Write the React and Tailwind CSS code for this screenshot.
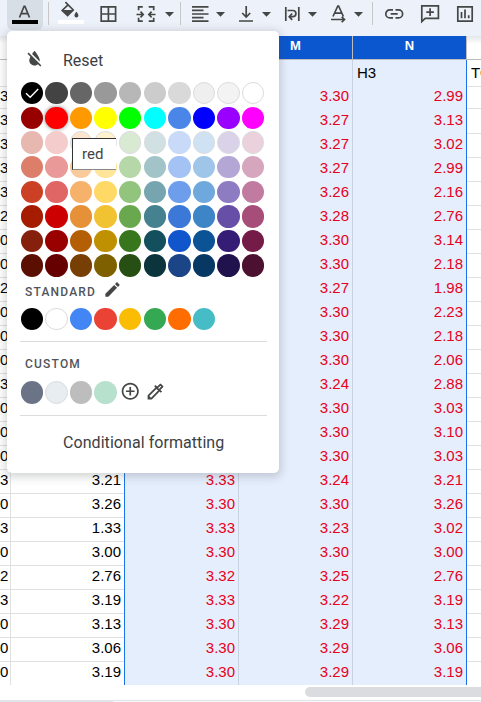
import React from "react";
import { MdOutlineColorize, MdAddCircleOutline } from "react-icons/md";

const PALETTE = [
  ["#000000", "#434343", "#666666", "#999999", "#b7b7b7", "#cccccc", "#d9d9d9", "#efefef", "#f3f3f3", "#ffffff"],
  ["#980000", "#ff0000", "#ff9900", "#ffff00", "#00ff00", "#00ffff", "#4a86e8", "#0000ff", "#9900ff", "#ff00ff"],
  ["#e6b8af", "#f4cccc", "#fce5cd", "#fff2cc", "#d9ead3", "#d0e0e3", "#c9daf8", "#cfe2f3", "#d9d2e9", "#ead1dc"],
  ["#dd7e6b", "#ea9999", "#f9cb9c", "#ffe599", "#b6d7a8", "#a2c4c9", "#a4c2f4", "#9fc5e8", "#b4a7d6", "#d5a6bd"],
  ["#cc4125", "#e06666", "#f6b26b", "#ffd966", "#93c47d", "#76a5af", "#6d9eeb", "#6fa8dc", "#8e7cc3", "#c27ba0"],
  ["#a61c00", "#cc0000", "#e69138", "#f1c232", "#6aa84f", "#45818e", "#3c78d8", "#3d85c6", "#674ea7", "#a64d79"],
  ["#85200c", "#990000", "#b45f06", "#bf9000", "#38761d", "#134f5c", "#1155cc", "#0b5394", "#351c75", "#741b47"],
  ["#5b0f00", "#660000", "#783f04", "#7f6000", "#274e13", "#0c343d", "#1c4587", "#073763", "#20124d", "#4c1130"],
];
const OUTLINED = new Set(["#efefef", "#f3f3f3", "#ffffff", "#fce5cd", "#fff2cc", "#d9ead3", "#d0e0e3", "#cfe2f3", "#d9d2e9", "#ead1dc", "#e8edf1"]);
const STANDARD = ["#000000", "#ffffff", "#4285f4", "#ea4335", "#fbbc04", "#34a853", "#ff6d01", "#46bdc6"];
const CUSTOM = ["#6b7487", "#e8edf1", "#bdbdbd", "#b7e1cd"];

const ROWS = [
  ["3", "", "", "3.30", "2.99"],
  ["3", "", "", "3.27", "3.13"],
  ["3", "", "", "3.27", "3.02"],
  ["3", "", "", "3.27", "2.99"],
  ["3", "", "", "3.26", "2.16"],
  ["2", "", "", "3.28", "2.76"],
  ["0", "", "", "3.30", "3.14"],
  ["0", "", "", "3.30", "2.18"],
  ["2", "", "", "3.27", "1.98"],
  ["0", "", "", "3.30", "2.23"],
  ["0", "", "", "3.30", "2.18"],
  ["0", "", "", "3.30", "2.06"],
  ["3", "", "", "3.24", "2.88"],
  ["0", "", "", "3.30", "3.03"],
  ["0", "", "", "3.30", "3.10"],
  ["0", "", "", "3.30", "3.03"],
  ["3", "3.21", "3.33", "3.24", "3.21"],
  ["0", "3.26", "3.30", "3.30", "3.26"],
  ["3", "1.33", "3.33", "3.23", "3.02"],
  ["0", "3.00", "3.30", "3.30", "3.00"],
  ["2", "2.76", "3.32", "3.25", "2.76"],
  ["3", "3.19", "3.33", "3.22", "3.19"],
  ["0", "3.13", "3.30", "3.29", "3.13"],
  ["0", "3.06", "3.30", "3.29", "3.06"],
  ["0", "3.19", "3.30", "3.29", "3.19"],
];

const COLS = "grid grid-cols-[11px_114px_114px_114px_114px_14px]";

function Swatch({ color, checked, hovered }) {
  return (
    <div
      className={
        "flex h-[22.4px] w-[22.4px] items-center justify-center rounded-full " +
        (OUTLINED.has(color) ? "border border-[#dadce0] " : "") +
        (hovered ? "shadow-[0_0_4px_rgba(0,0,0,0.5)]" : "")
      }
      style={{ backgroundColor: color }}
    >
      {checked && (
        <svg width="16" height="14" viewBox="0 0 16 14" fill="none" stroke="#fff" strokeWidth="1.4">
          <path d="M2 7.2 6.2 11.2 14.2 3" />
        </svg>
      )}
    </div>
  );
}

function Caret({ className }) {
  return (
    <svg className={className} width="9" height="5" viewBox="0 0 9 5" fill="#444746">
      <path d="M0 0h9L4.5 4.8z" />
    </svg>
  );
}

function Icon({ className = "", w = 20, children }) {
  return (
    <svg className={"shrink-0 " + className} width={w} height="26" viewBox={`0 0 ${w} 26`} fill="none" stroke="#444746" strokeWidth="1.7">
      {children}
    </svg>
  );
}

function Divider({ className }) {
  return <div className={"h-[23px] w-px shrink-0 bg-[#c7c7c7] " + className} />;
}

function Toolbar() {
  return (
    <div className="flex h-9 items-start overflow-hidden bg-[#edf1f9]">
      <div className="ml-[7px] flex h-[30px] w-9 shrink-0 justify-center rounded-b-md bg-[#d8dee6]">
        <Icon w={26}>
          <path d="M7.5 17.5 12.1 6.300h.8l4.600 11.200M9 13.700h7" />
          <path d="M0 20h26v4H0z" fill="#000" stroke="none" />
        </Icon>
      </div>
      <Divider className="mt-[2px] ml-[5px]" />
      <Icon w={26} className="ml-[9px]">
        <path d="M7.4 2.2 15.2 10 9.6 15.6 4.2 10.4 10 4.8" />
        <path d="M4.6 10h10.2l-5.2 5.6z" fill="#444746" stroke="none" />
        <path d="M18.4 11.8s-2 2.2-2 3.6a2 2 0 0 0 4 0c0-1.400-2-3.600-2-3.600z" fill="#444746" stroke="none" />
        <path d="M0 20h26v4H0z" fill="#fff" stroke="none" />
      </Icon>
      <Icon w={20} className="ml-[14px]">
        <path d="M3.2 6.800h14.400v14.400H3.200zM10.400 6.800v14.400M3.200 14h14.400" />
      </Icon>
      <Icon w={20} className="ml-[18px]">
        <path d="M6.800 6.800H2.600v3.400M2.600 17.800v3.400h4.200M12.700 6.800h5v3.400M17.700 17.800v3.400h-5M.5 14.500h6.500M19.500 14.500h-6.500M4.500 11.700l2.700 2.800-2.700 2.800M15.600 11.700l-2.700 2.800 2.700 2.800" />
      </Icon>
      <Caret className="mt-[12px] ml-[9px] shrink-0" />
      <Divider className="mt-[2px] ml-[6px]" />
      <Icon w={20} className="ml-[10px]">
        <path d="M1 6.800h16.500M1 10.400h11.500M1 14h16.500M1 17.600h11.500M1 21.200h16.500" />
      </Icon>
      <Caret className="mt-[12px] ml-[5px] shrink-0" />
      <Icon w={16} className="ml-[13px]">
        <path d="M8.200 6v11M4.200 13l4 4 4-4M1 21h14" />
      </Icon>
      <Caret className="mt-[12px] ml-[8px] shrink-0" />
      <Icon w={20} className="ml-[12px]">
        <path d="M2.800 7v14M15.800 7v14M4.500 10.500h5.300a3.100 3.100 0 0 1 0 6.200H6.200M9.200 13.500l-3 3.200 3 3.200" />
      </Icon>
      <Caret className="mt-[12px] ml-[5px] shrink-0" />
      <Icon w={20} className="ml-[12px]">
        <path d="M4 16.500 8.800 6h.8l4.800 10.500M5.500 13.200h7.300M2 19.500h13M12.700 16.800l2.800 2.700-2.800 2.700" />
      </Icon>
      <Caret className="mt-[12px] ml-[5px] shrink-0" />
      <Divider className="mt-[2px] ml-[9px]" />
      <Icon w={20} className="ml-[11px]">
        <path d="M9 9.900H5.800a4 4 0 0 0 0 8H9M11.500 9.900h3.100a4 4 0 0 1 0 8h-3.100M6.700 13.900h7" />
      </Icon>
      <Icon w={20} className="ml-[16px]">
        <path d="M1.800 5.800h16.600v12.500H5.200l-3.400 3.200zM10.100 8.300v7.600M6.300 12.100h7.600" />
      </Icon>
      <Icon w={20} className="ml-[15px]">
        <path d="M2.800 6.800H17.200v14.400H2.800zM6.500 12v6.300M10 9.500v8.800M13.700 15.300v3" />
      </Icon>
    </div>
  );
}

function Sheet() {
  return (
    <div className="h-[649px] overflow-hidden">
      <div className={COLS + " h-6 border-b border-[#bdbdbd] bg-white text-center text-[13px] leading-[20px] font-bold text-white [font-family:'Liberation_Sans',Arial,sans-serif]"}>
        <div className="bg-gradient-to-b from-[#e4e6e9] to-white to-30%" />
        <div className="bg-white" />
        <div className="border-r border-[#bdbdbd] bg-[#0b57d0]">L</div>
        <div className="border-r border-[#bdbdbd] bg-[#0b57d0]">M</div>
        <div className="border-r border-[#bdbdbd] bg-[#0b57d0]">N</div>
        <div className="bg-gradient-to-b from-[#e4e6e9] to-white to-35%" />
      </div>
      <div className={COLS + " h-6 text-[15px] leading-[26px] text-black"}>
        <div className="border-r border-b border-[#e0e0e0]" />
        <div className="border-r border-b border-r-[#1a73e8] border-b-[#e0e0e0]" />
        <div className="border-r border-b border-[#c9d1e2] bg-[#e5eefd]" />
        <div className="border-r border-b border-[#c9d1e2] bg-[#e5eefd]" />
        <div className="border-r border-b border-r-[#1a73e8] border-b-[#c9d1e2] bg-[#e5eefd] pl-[4px]">H3</div>
        <div className="overflow-hidden border-b border-[#e0e0e0] pl-[4px]">TO</div>
      </div>
      {[...ROWS, ["", "", "", "", ""]].map((r, i) => (
        <div key={i} className={COLS + " text-right text-[15px] text-black " + (i === 0 ? "h-[23px] leading-[24px]" : "h-6 leading-[26px]")}>
          <div className="border-r border-b border-[#e0e0e0] pr-[3px]">{r[0]}</div>
          <div className="border-r border-b border-r-[#1a73e8] border-b-[#e0e0e0] pr-[3px]">{r[1]}</div>
          <div className="border-r border-b border-[#c9d1e2] bg-[#e5eefd] pr-[3px] text-[#e8001c]">{r[2]}</div>
          <div className="border-r border-b border-[#c9d1e2] bg-[#e5eefd] pr-[3px] text-[#e8001c]">{r[3]}</div>
          <div className="border-r border-b border-r-[#1a73e8] border-b-[#c9d1e2] bg-[#e5eefd] pr-[3px] text-[#e8001c]">{r[4]}</div>
          <div className="border-b border-[#e0e0e0]" />
        </div>
      ))}
    </div>
  );
}

function ColorMenu() {
  return (
    <div className="absolute top-[31px] left-[7px] h-[442px] w-[272px] rounded-[5px] bg-white text-[#3c4043] shadow-[0_2px_8px_2px_rgba(60,64,67,0.22)] [font-family:Roboto,sans-serif]">
      <div className="flex h-[51px] items-center pt-[8px] pl-[17px] text-[16px] leading-5">
        <svg className="-mt-[4px] h-[21px] w-[21px]" viewBox="0 0 24 24" fill="#444746">
          <path d="M18 14c0-4-6-10.800-6-10.800s-1.330 1.510-2.730 3.520l8.590 8.590c.09-.42.14-.86.14-1.310zm-.88 3.120L12.500 12.500 5.270 5.270 4 6.550l3.320 3.320C6.550 11.330 6 12.790 6 14c0 3.310 2.690 6 6 6 1.520 0 2.900-.57 3.960-1.500l2.630 2.630 1.270-1.270-2.740-2.740z" />
        </svg>
        <span className="ml-[18px]">Reset</span>
      </div>
      <div className="flex flex-col gap-[2.25px] pl-[13.700px]">
        {PALETTE.map((row, y) => (
          <div key={y} className="flex gap-[2.2px]">
            {row.map((c, x) => (
              <Swatch key={c} color={c} checked={x === 0 && y === 0} hovered={x === 1 && y === 1} />
            ))}
          </div>
        ))}
      </div>
      <div className="mt-[3px] flex h-5 items-center pl-[18px] text-[12px] font-medium tracking-[1.2px] text-[#50555a]">
        <span className="pt-[5px]">STANDARD</span>
        <svg className="ml-[7px] h-[19px] w-[19px]" viewBox="0 0 24 24" fill="#444746">
          <path d="M3 17.250V21h3.750L17.810 9.940l-3.750-3.750L3 17.250zM20.710 7.040a1 1 0 0 0 0-1.410l-2.340-2.340a1 1 0 0 0-1.410 0l-1.830 1.830 3.750 3.750 1.830-1.830z" />
        </svg>
      </div>
      <div className="mt-[8px] flex gap-[2.2px] pl-[13.700px]">
        {STANDARD.map((c) => <Swatch key={c} color={c} />)}
      </div>
      <div className="mt-[11px] mr-3 ml-[13px] h-px bg-[#dadce0]" />
      <div className="mt-[13px] pl-[18px] text-[12px] leading-[18px] font-medium tracking-[1.2px] text-[#50555a]">CUSTOM</div>
      <div className="mt-[8px] flex items-center gap-[2.2px] pl-[13.700px]">
        {CUSTOM.map((c) => <Swatch key={c} color={c} />)}
        <MdAddCircleOutline className="-mt-[2px] ml-[1px] h-[20.500px] w-[20.500px] text-[#444746]" />
        <MdOutlineColorize className="-mt-[2px] ml-[2px] h-[21px] w-[21px] text-[#444746]" />
      </div>
      <div className="mt-[11px] mr-3 ml-[13px] h-px bg-[#dadce0]" />
      <div className="mt-[17px] pl-[56px] text-[16px] leading-5 tracking-[0.06px]">Conditional formatting</div>
      <div className="absolute top-[107px] left-[65px] h-8 w-11 border-t border-l border-[#333] border-b border-b-[#888] bg-white pl-[9px] text-[15px] leading-[30px] text-[#444]">
        red
      </div>
    </div>
  );
}

export default function App() {
  return (
    <div className="relative flex h-[702px] w-[481px] flex-col overflow-hidden bg-white [font-family:'Liberation_Sans',Arial,sans-serif]">
      <Toolbar />
      <Sheet />
      <div className="flex h-[15px] justify-end pt-[2px]">
        <div className="h-[10px] w-[176px] rounded-l-full bg-[#dadce0]" />
      </div>
      <div className="flex h-[2px] border-t border-[#e1e3e6]">
        <div className="w-[113px] bg-[#e1e6ed]" />
        <div className="flex-1 bg-[#f8f9fa]" />
      </div>
      <ColorMenu />
    </div>
  );
}
